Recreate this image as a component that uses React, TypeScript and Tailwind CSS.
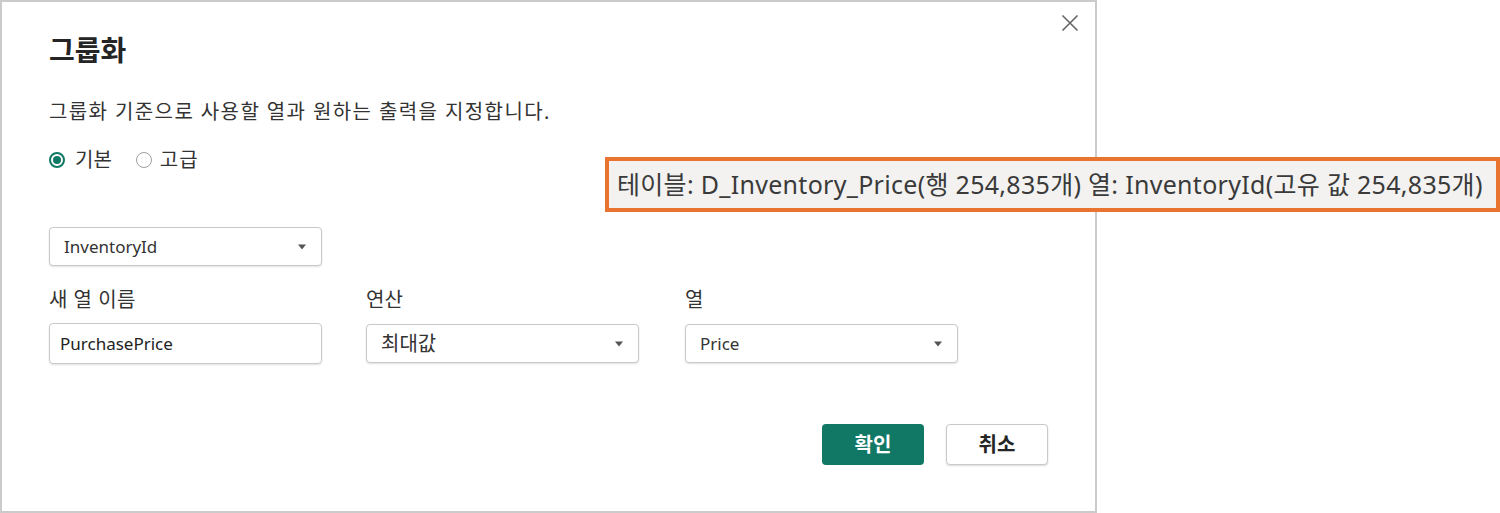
import React from "react";

const font = { fontFamily: '"Noto Sans", "Noto Sans CJK KR", sans-serif' };

function Caret() {
  return (
    <svg width="10" height="6" viewBox="0 0 10 6" className="shrink-0">
      <path d="M1 0.5 L9 0.5 L5 5.5 Z" fill="#555" />
    </svg>
  );
}

function Select({ value, ko }: { value: string; ko?: boolean }) {
  return (
    <div
      className={`w-[273px] h-[39px] rounded-[4px] border border-[#c9c9c9] shadow-[0_1px_2px_rgba(0,0,0,0.12)] bg-white flex items-center justify-between pl-[14px] pr-[14px] text-[#333] ${
        ko ? "text-[20px]" : "text-[17px]"
      }`}
    >
      <span>{value}</span>
      <Caret />
    </div>
  );
}

export default function App() {
  return (
    <div className="w-[1500px] h-[513px] bg-white relative overflow-hidden" style={font}>
      <div className="w-[1097px] h-[513px] border-2 border-[#cbcbcb] bg-white relative">
        <button className="absolute right-[16px] top-[12px] w-[18px] h-[18px] flex items-center justify-center">
          <svg width="18" height="18" viewBox="0 0 18 18">
            <path d="M1.5 1.5 L16.5 16.5 M16.5 1.5 L1.5 16.5" stroke="#666" strokeWidth="1.6" />
          </svg>
        </button>
        <div className="pl-[47px] pt-[28px] flex flex-col">
          <h1 className="text-[28px] font-bold text-[#252525] leading-[40px]">그룹화</h1>
          <p className="mt-[28px] text-[20px] tracking-[1.4px] text-[#333] leading-[28px]">
            그룹화 기준으로 사용할 열과 원하는 출력을 지정합니다.
          </p>
          <div className="mt-[20px] h-[28px] flex items-center text-[20px] text-[#333] leading-[28px]">
            <span className="w-[16px] h-[16px] rounded-full border-2 border-[#117865] flex items-center justify-center">
              <span className="w-[8px] h-[8px] rounded-full bg-[#117865]" />
            </span>
            <span className="ml-[10px]">기본</span>
            <span className="ml-[24px] w-[16px] h-[16px] rounded-full border-[1.5px] border-[#a0a0a0]" />
            <span className="ml-[8px] tracking-[1px]">고급</span>
          </div>
          <div className="mt-[53px]">
            <Select value="InventoryId" />
          </div>
          <div className="mt-[20px] flex text-[20px] text-[#333] leading-[28px]">
            <div className="flex flex-col">
              <span className="h-[28px] tracking-[0.5px]">새 열 이름</span>
              <div className="mt-[9px] w-[273px] h-[41px] rounded-[4px] border border-[#c9c9c9] shadow-[0_1px_2px_rgba(0,0,0,0.12)] flex items-center pl-[10px] text-[17px] text-[#222]">
                PurchasePrice
              </div>
            </div>
            <div className="flex flex-col ml-[44px]">
              <span className="h-[28px]">연산</span>
              <div className="mt-[10px]">
                <Select value="최대값" ko />
              </div>
            </div>
            <div className="flex flex-col ml-[46px]">
              <span className="h-[28px]">열</span>
              <div className="mt-[10px]">
                <Select value="Price" />
              </div>
            </div>
          </div>
          <div className="mt-[60px] flex justify-end pr-[47px] gap-[22px]">
            <button className="w-[102px] h-[41px] rounded-[4px] bg-[#117865] text-white text-[20px] font-bold">
              확인
            </button>
            <button className="w-[102px] h-[41px] rounded-[4px] border border-[#c9c9c9] shadow-[0_1px_2px_rgba(0,0,0,0.15)] bg-white text-[#252525] text-[20px] font-bold">
              취소
            </button>
          </div>
        </div>
      </div>
      <div className="absolute left-[605px] top-[157px] w-[895px] h-[55px] border-[4px] border-[#e8742f] bg-[#f3f2f1] flex items-center pl-[8px] text-[25px] tracking-[0.3px] text-[#3a3a3a] whitespace-nowrap">
        테이블: D_Inventory_Price(행 254,835개) 열: InventoryId(고유 값 254,835개)
      </div>
    </div>
  );
}
